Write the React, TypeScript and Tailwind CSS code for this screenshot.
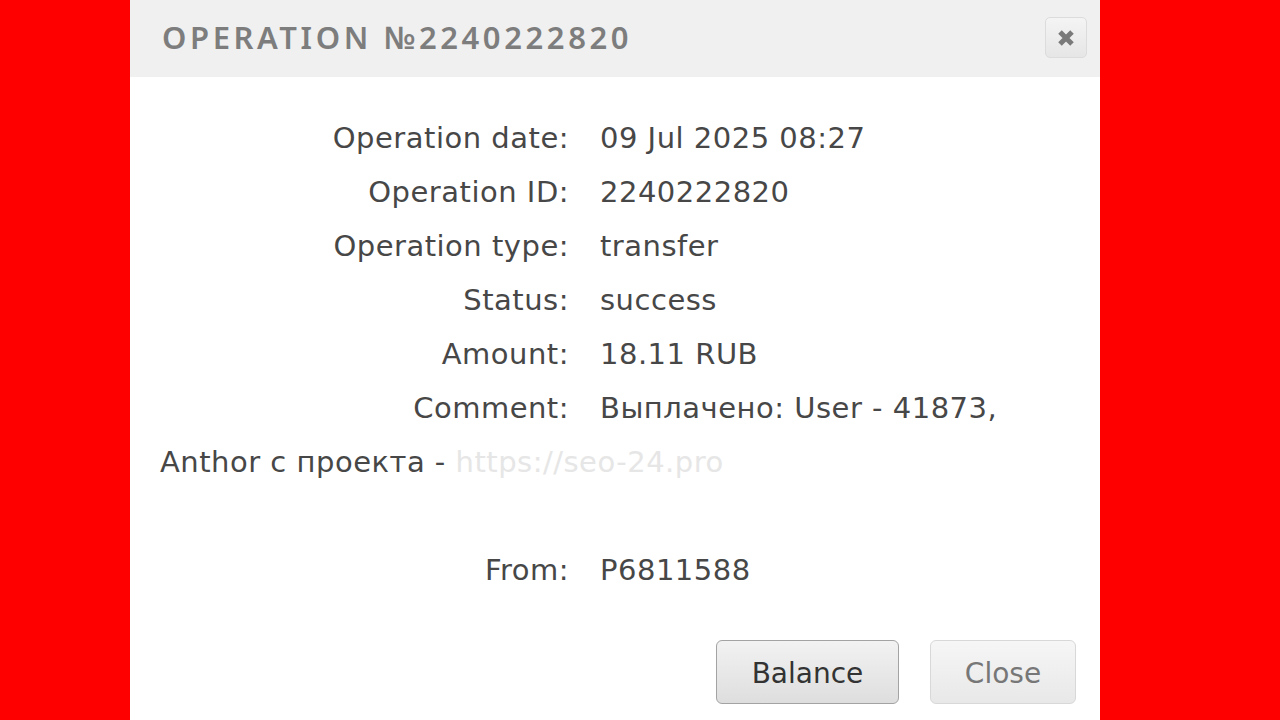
import React from 'react';

const rows: [string, string][] = [
  ['Operation date:', '09 Jul 2025 08:27'],
  ['Operation ID:', '2240222820'],
  ['Operation type:', 'transfer'],
  ['Status:', 'success'],
  ['Amount:', '18.11 RUB'],
];

const Label: React.FC<{ children: React.ReactNode }> = ({ children }) => (
  <span className="inline-block w-[409px] text-right mr-[31px] text-[#474747]">{children}</span>
);

export default function App() {
  return (
    <div className="w-full h-[720px] bg-[#ff0000] flex justify-center overflow-hidden">
      <div className="w-[970px] h-full bg-white ml-[-50px] flex flex-col">
        {/* header */}
        <div className="h-[77px] bg-[#f0f0f0] flex items-center justify-between pl-[32px] pr-[13px]">
          <h1 className="text-[31px] tracking-[3.6px] text-[#7d7d7d] font-['Noto_Sans',sans-serif] font-semibold leading-none mt-[-2px]">
            OPERATION №2240222820
          </h1>
          <button className="w-[42px] h-[41px] rounded-[5px] border border-[#dcdcdc] bg-gradient-to-b from-[#f4f4f4] to-[#e6e6e6] flex items-center justify-center mb-[2px]">
            <svg width="20" height="20" viewBox="0 0 20 20">
              <path d="M4 4 L16 16 M16 4 L4 16" stroke="#7a7a7a" strokeWidth="5" strokeLinecap="butt" />
            </svg>
          </button>
        </div>

        {/* body */}
        <div className="pl-[30px] pr-[30px] pt-[34px] text-[29px] tracking-[0.5px] leading-[54px] text-[#474747] font-['DejaVu_Sans',sans-serif]">
          {rows.map(([k, v]) => (
            <div key={k}>
              <Label>{k}</Label>
              <span>{v}</span>
            </div>
          ))}
          <div>
            <Label>Comment:</Label>
            <span>Выплачено: User - 41873,</span>
            <br />
            <span>Anthor с проекта - </span>
            <span className="text-[#e6e6e6]">https://seo-24.pro</span>
          </div>
          <div className="h-[54px]" />
          <div>
            <Label>From:</Label>
            <span>P6811588</span>
          </div>
        </div>

        {/* footer */}
        <div className="flex justify-end gap-[31px] pr-[24px] mt-[43px] font-['DejaVu_Sans',sans-serif] text-[28px]">
          <button className="w-[183px] h-[64px] pt-[4px] rounded-[6px] border border-[#a3a3a3] bg-gradient-to-b from-[#f2f2f2] to-[#dedede] text-[#333]">
            Balance
          </button>
          <button className="w-[146px] h-[64px] pt-[4px] rounded-[6px] border border-[#d8d8d8] bg-gradient-to-b from-[#f6f6f6] to-[#e8e8e8] text-[#777]">
            Close
          </button>
        </div>
      </div>
    </div>
  );
}
